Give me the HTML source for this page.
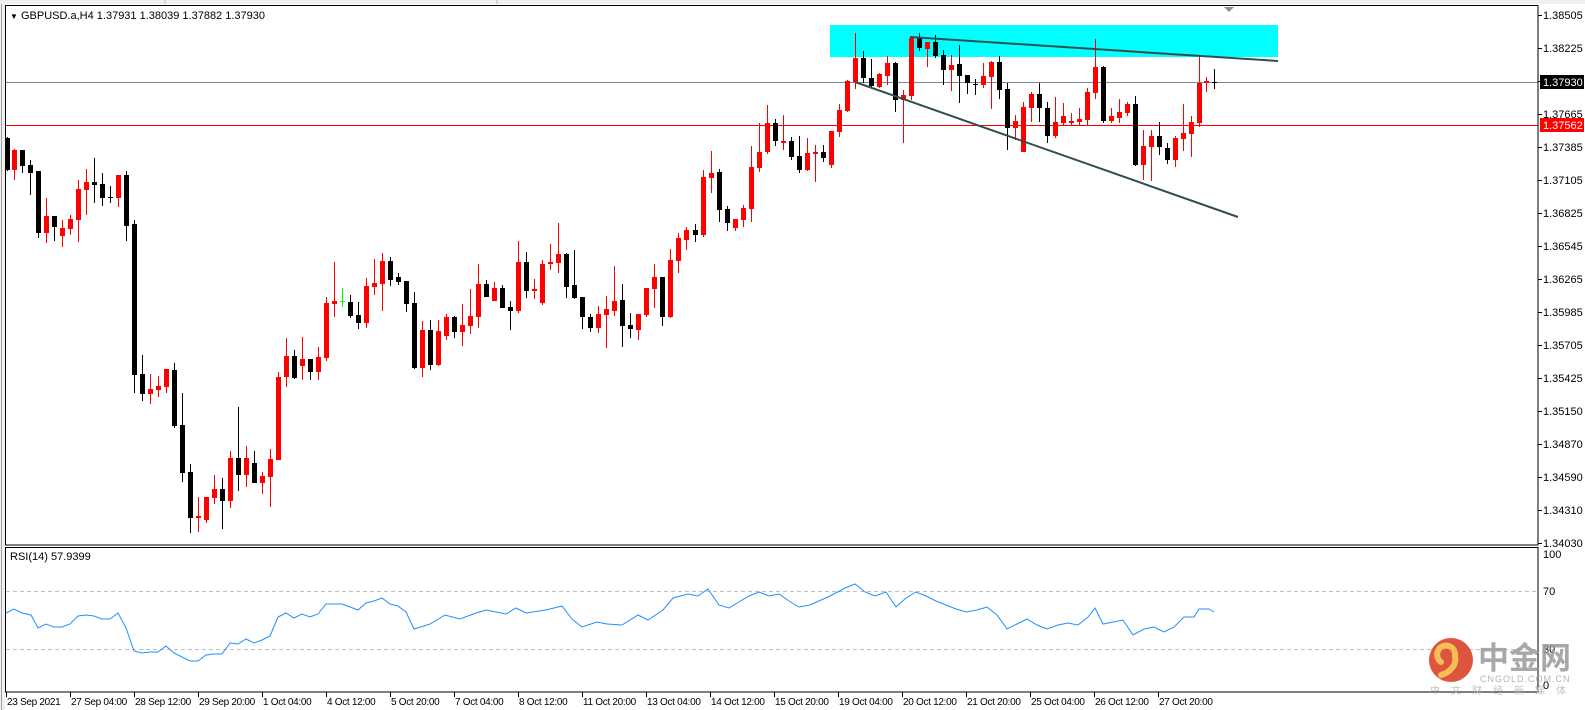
<!DOCTYPE html>
<html><head><meta charset="utf-8"><style>
html,body{margin:0;padding:0;background:#fff;width:1585px;height:710px;overflow:hidden}
svg{display:block}
text{font-family:"Liberation Sans","Noto Sans CJK SC",sans-serif;font-size:11px;fill:#000}
.d{font-size:10px;letter-spacing:-0.3px}
</style></head><body>
<svg id="s" width="1585" height="710" xmlns="http://www.w3.org/2000/svg">
<rect x="0" y="0" width="1585" height="4" fill="#f0f0f0"/>
<line x1="165" y1="0" x2="165" y2="4" stroke="#bbb"/>
<line x1="497" y1="0" x2="497" y2="4" stroke="#bbb"/>
<rect x="0" y="4" width="5" height="706" fill="#f0f0f0"/>
<line x1="1.5" y1="4" x2="1.5" y2="710" stroke="#a0a0a0"/>
<rect x="830" y="25" width="448" height="32" fill="#00ffff"/>
<line x1="5" y1="82.5" x2="1538" y2="82.5" stroke="#778899"/>
<line x1="5" y1="125.5" x2="1538" y2="125.5" stroke="#ff0000"/>
<g id="candles"></g>
<line x1="910" y1="37" x2="1278" y2="61" stroke="#2f4f4f" stroke-width="2"/>
<line x1="855" y1="82" x2="1238" y2="217" stroke="#2f4f4f" stroke-width="2"/>
<polygon points="1224,7 1234,7 1229,12" fill="#8a8f96"/>
<rect x="5.5" y="5.5" width="1532.5" height="539.5" fill="none" stroke="#000"/>
<rect x="5.5" y="547.5" width="1532.5" height="144.5" fill="none" stroke="#000"/>
<text x="10" y="19"><tspan font-size="8">▼</tspan> GBPUSD.a,H4  1.37931 1.38039 1.37882 1.37930</text>
<text x="10" y="560">RSI(14) 57.9399</text>
<line x1="6" y1="591.5" x2="1538" y2="591.5" stroke="#c0c0c0" stroke-dasharray="4,3"/>
<line x1="6" y1="649.5" x2="1538" y2="649.5" stroke="#c0c0c0" stroke-dasharray="4,3"/>
<polyline id="rsi" fill="none" stroke="#1e90ff" stroke-width="1"/>
<g id="axis"></g>
<rect x="1540" y="75" width="44" height="14" fill="#000"/>
<text x="1543" y="86" style="fill:#fff">1.37930</text>
<rect x="1540" y="118" width="44" height="14" fill="#ff0000"/>
<text x="1543" y="129" style="fill:#fff">1.37562</text>
<text x="1543" y="558">100</text>
<text x="1543" y="595">70</text>
<text x="1543" y="653">30</text>
<text x="1543" y="689">0</text>
<g opacity="0.85">
<circle cx="1451" cy="660" r="22" fill="#d9381e"/>
<path d="M1441,662 a9,9 0 1,1 14,-6 c2,8 -4,16 -14,19" fill="none" stroke="#f6b23a" stroke-width="6" stroke-linecap="round"/>
<text x="1478" y="669" style="font-size:31px;font-weight:bold;fill:#9a9a9a">中金网</text>
<text x="1480" y="682" style="font-size:9px;fill:#a8a8a8;letter-spacing:1px">CNGOLD.COM.CN</text>
<text x="1430" y="694" style="font-size:10px;fill:#b8b8b8;letter-spacing:11px">中文财经新媒体</text>
</g>
</svg>
<script>
var D=[
[7,'k',138,170,137,171],[14,'r',150,170,149,180],[22,'k',150,166,150,173],[30,'k',165,173,160,195],[38,'k',171,233,171,238],
[46,'r',216,233,198,243],[54,'k',216,227,216,241],[62,'r',228,236,220,247],[70,'r',219,229,215,235],[78,'r',189,220,180,242],
[86,'r',182,190,169,215],[94,'k',182,185,158,203],[102,'k',184,198,173,206],[110,'k',197,198,186,203],[118,'r',175,198,175,207],
[126,'k',175,226,171,241],[134,'k',224,375,220,393],[142,'k',374,394,355,401],[150,'r',389,394,374,404],[158,'r',386,390,376,397],
[166,'r',369,387,369,393],[174,'k',370,426,363,428],[182,'k',425,473,393,482],[190,'k',472,518,464,533],[198,'r',516,518,497,532],
[206,'r',497,520,497,523],[214,'r',489,498,475,504],[222,'k',489,501,478,529],[230,'r',458,501,451,508],[238,'k',458,475,407,491],
[246,'r',458,475,446,487],[254,'k',463,483,451,483],[262,'r',476,483,472,494],[270,'r',459,477,449,507],[278,'r',377,460,372,460],
[286,'r',356,377,338,387],[294,'k',356,378,350,379],[302,'r',359,366,337,380],[310,'k',359,372,359,380],[318,'r',357,372,347,380],
[326,'r',303,358,297,361],[334,'r',301,304,262,317],[342,'g',301,302,288,307],[350,'k',302,316,295,318],[358,'k',315,323,302,329],
[366,'r',286,323,278,328],[374,'r',283,287,259,295],[382,'r',261,284,253,311],[390,'k',261,280,257,286],[398,'k',277,282,273,285],
[406,'k',281,304,281,312],[414,'k',303,368,292,369],[422,'r',330,368,321,377],[430,'k',330,365,320,370],[438,'r',331,365,320,366],
[446,'r',317,336,314,340],[454,'k',317,332,316,338],[462,'r',325,332,304,346],[470,'r',316,326,289,334],[478,'r',284,317,264,328],
[486,'k',284,297,280,297],[494,'r',288,301,282,301],[502,'k',288,308,285,308],[510,'k',307,311,301,330],[518,'r',262,311,241,313],
[526,'k',262,291,252,298],[534,'r',289,291,279,299],[542,'r',264,303,260,305],[550,'r',262,264,244,270],[558,'r',254,263,223,273],
[566,'k',254,287,253,298],[574,'k',285,298,250,299],[582,'k',297,317,297,329],[590,'k',317,328,314,332],[598,'r',314,328,306,333],
[606,'r',309,315,296,348],[614,'r',301,311,266,316],[622,'k',300,326,284,347],[630,'k',325,329,313,338],[638,'r',314,330,314,340],
[646,'r',288,315,288,317],[654,'r',277,289,264,308],[662,'k',277,317,277,326],[670,'r',260,317,249,318],[678,'r',238,261,233,273],
[686,'r',230,240,227,250],[695,'k',230,235,224,242],[703,'r',177,235,170,237],[711,'r',173,178,151,193],[719,'k',172,210,169,222],
[727,'k',209,223,206,231],[735,'r',219,228,219,231],[743,'r',208,220,205,227],[751,'r',167,209,146,222],[759,'r',152,168,123,172],
[767,'r',123,152,105,154],[775,'k',123,141,119,146],[783,'r',141,143,115,150],[791,'k',141,157,137,160],[799,'k',156,170,136,173],
[807,'r',153,170,138,171],[815,'r',152,154,145,182],[823,'k',152,158,145,162],[831,'r',131,165,131,168],[839,'r',110,132,104,137],
[847,'r',81,111,80,112],[855,'r',58,82,33,89],[863,'k',58,78,51,83],[871,'k',78,86,59,87],[879,'r',74,87,73,88],
[887,'r',63,76,56,85],[895,'k',63,100,62,112],[903,'r',95,100,90,143],[911,'r',38,96,37,100],[919,'k',38,48,33,51],
[927,'r',42,49,42,67],[935,'k',42,56,35,58],[943,'k',55,70,50,85],[951,'r',65,70,55,91],[959,'k',64,76,45,103],
[967,'k',75,83,75,94],[975,'k',84,85,79,95],[983,'r',76,85,63,88],[991,'r',62,77,61,109],[999,'k',62,90,56,99],
[1007,'k',89,128,83,150],[1015,'r',121,128,115,140],[1023,'r',107,152,102,152],[1031,'r',94,108,92,122],[1039,'k',94,108,83,122],
[1047,'k',108,136,102,143],[1055,'r',122,136,97,138],[1063,'r',116,123,103,125],[1071,'r',121,123,113,125],[1079,'r',119,122,108,125],
[1087,'r',92,120,88,125],[1095,'r',67,93,39,99],[1103,'k',67,121,66,123],[1111,'r',116,121,108,123],[1119,'r',112,118,99,123],
[1127,'r',104,113,102,116],[1135,'k',104,165,96,166],[1143,'r',146,165,130,180],[1151,'r',136,147,130,181],[1159,'k',136,147,122,155],
[1167,'k',148,160,143,164],[1175,'r',138,160,136,167],[1183,'r',133,139,104,151],[1191,'r',122,134,116,157],[1199,'r',83,123,56,127],
[1206,'r',81,83,77,92],[1214,'k',82,83,69,89]];
var col={r:'#ff0000',k:'#000000',g:'#00ff00'};
var h='';
D.forEach(function(c){var f=col[c[1]];
h+='<rect x="'+c[0]+'" y="'+c[4]+'" width="1" height="'+Math.max(1,c[5]-c[4])+'" fill="'+f+'"/>';
h+='<rect x="'+(c[0]-2)+'" y="'+c[2]+'" width="5" height="'+Math.max(1,c[3]-c[2])+'" fill="'+f+'"/>';});
document.getElementById('candles').innerHTML=h;
var R=[[6,613],[14,609],[22,613],[31,615],[38,628],[46,624],[54,627],[62,627],[70,624],[78,616],[86,615],[94,616],[102,619],[110,619],[118,613],[126,628],[134,651],[142,653],[150,652],[158,652],[166,646],[174,653],[182,657],[190,661],[198,661],[206,655],[214,654],[222,654],[230,643],[238,644],[246,639],[254,643],[262,640],[270,636],[278,617],[286,613],[294,618],[302,614],[310,617],[318,614],[326,604],[334,604],[342,604],[350,607],[358,610],[366,603],[374,601],[382,598],[390,604],[398,606],[406,612],[414,629]];
var T=[[415,612],[425,617],[440,608],[455,612],[470,606],[480,603],[500,607],[510,601],[520,606],[540,603],[555,599],[565,612],[575,620],[590,615],[600,617],[615,618],[630,608],[640,613],[655,603],[665,592],[680,588],[690,590],[700,583],[710,598],[720,601],[740,590],[750,586],[760,590],[770,588],[780,594],[790,600],[800,598],[820,590],[835,582],[845,578],[855,586],[865,590],[875,586],[885,600],[895,592],[905,586],[915,590],[925,594],[935,598],[945,602],[955,605],[965,603],[975,600],[985,608],[995,622],[1005,617],[1015,612],[1025,618],[1035,622],[1045,618],[1055,616],[1065,618],[1075,610],[1082,601],[1090,617],[1100,615],[1110,613],[1120,628],[1130,622],[1140,620],[1150,625],[1160,620],[1170,610],[1180,610],[1185,602],[1195,602],[1200,605]];
T.slice(1).forEach(function(p){R.push([Math.round(p[0]*1.012),Math.round(p[1]*1.0076+2)]);});
document.getElementById('rsi').setAttribute('points',R.map(function(p){return p.join(',')}).join(' '));
var P=['1.38505','1.38225','','1.37665','1.37385','1.37105','1.36825','1.36545','1.36265','1.35985','1.35705','1.35425','1.35150','1.34870','1.34590','1.34310','1.34030'];
var a='';
P.forEach(function(t,i){var y=15+i*33;a+='<line x1="1538" y1="'+(y+.5)+'" x2="1542" y2="'+(y+.5)+'" stroke="#000"/>';if(t)a+='<text x="1543" y="'+(y+4)+'">'+t+'</text>';});
var L=["23 Sep 2021","27 Sep 04:00","28 Sep 12:00","29 Sep 20:00","1 Oct 04:00","4 Oct 12:00","5 Oct 20:00","7 Oct 04:00","8 Oct 12:00","11 Oct 20:00","13 Oct 04:00","14 Oct 12:00","15 Oct 20:00","19 Oct 04:00","20 Oct 12:00","21 Oct 20:00","25 Oct 04:00","26 Oct 12:00","27 Oct 20:00"];
L.forEach(function(t,i){var x=6+i*64;a+='<line x1="'+(x+.5)+'" y1="692" x2="'+(x+.5)+'" y2="697" stroke="#000"/><text class="d" x="'+(x+1)+'" y="705">'+t+'</text>';});
document.getElementById('axis').innerHTML=a;
</script>
</body></html>
